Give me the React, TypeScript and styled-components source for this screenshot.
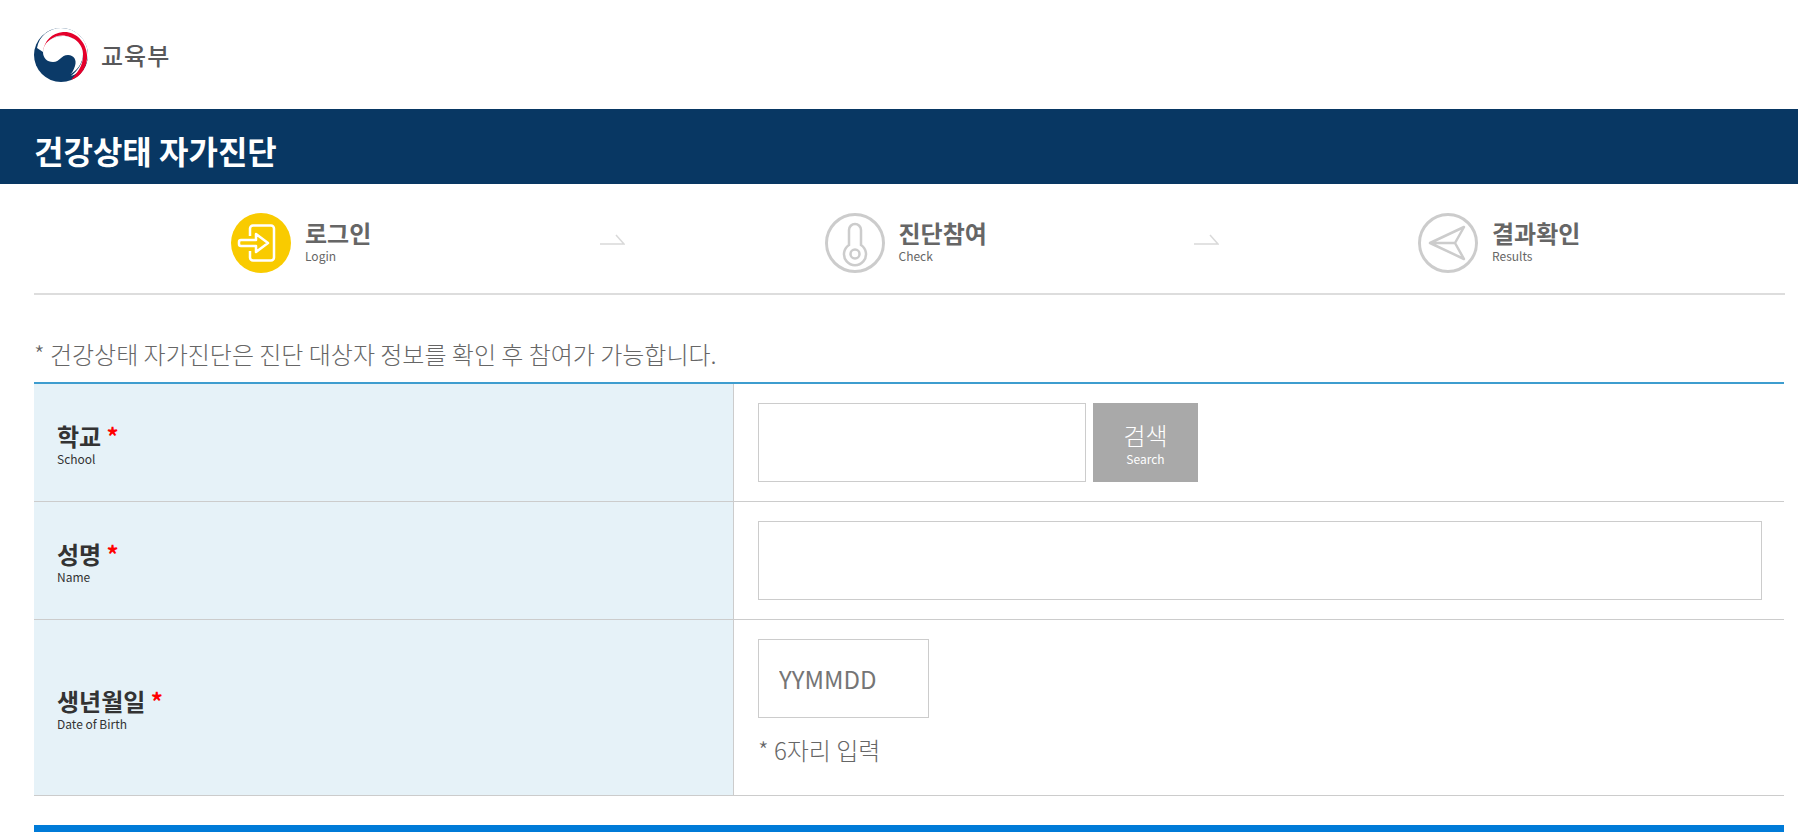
import styled, { createGlobalStyle } from 'styled-components';

const GlobalStyle = createGlobalStyle`
  * {
    box-sizing: border-box;
  }
  html, body {
    margin: 0;
    padding: 0;
    height: 832px;
    overflow: hidden;
    background: #fff;
    font-family: 'Noto Sans CJK KR', 'Noto Sans', sans-serif;
  }
`;

const Header = styled.header`
  height: 109px;
  padding: 28px 0 0 34px;
  display: flex;
  align-items: flex-start;
  gap: 11px;
`;

const MinistryName = styled.span`
  font-size: 24px;
  line-height: 54px;
  font-weight: 500;
  letter-spacing: 1px;
  color: #58585a;
`;

const TitleBar = styled.h1`
  margin: 0;
  height: 75px;
  padding-left: 34px;
  background: #083763;
  color: #fff;
  font-size: 32px;
  line-height: 83px;
  font-weight: 700;
`;

const Main = styled.main`
  width: 1751px;
  margin-left: 34px;
`;

const Steps = styled.ol`
  list-style: none;
  margin: 0;
  height: 111px;
  padding: 29px 0 0 197px;
  display: grid;
  grid-template-columns: repeat(3, 593.5px);
  border-bottom: 2px solid #dddddd;
`;

const Step = styled.li`
  display: grid;
  grid-template-columns: 60px 309px 25px;
  align-items: start;
`;

const StepText = styled.div`
  margin-left: 14px;
  padding-top: 5px;
`;

const StepTitle = styled.div`
  font-size: 24px;
  line-height: 30px;
  font-weight: 700;
  color: #666666;
`;

const StepSub = styled.div`
  font-size: 12px;
  line-height: 16px;
  color: #666666;
`;

const StepArrow = styled.svg`
  width: 25px;
  height: 12px;
  margin-top: 20px;
`;

const Notice = styled.p`
  margin: 0;
  height: 87px;
  padding-top: 39px;
  font-size: 24px;
  line-height: 40px;
  font-weight: 300;
  color: #666666;
`;

const Table = styled.div`
  width: 1750px;
  border-top: 2px solid #3e9dcf;
`;

const Row = styled.div<{ $height: number }>`
  display: grid;
  grid-template-columns: 700px 1fr;
  height: ${props => props.$height}px;
  border-bottom: 1px solid #cccccc;
`;

const LabelCell = styled.div`
  background: #e6f2f8;
  border-right: 1px solid #cccccc;
  padding-left: 23px;
  display: flex;
  flex-direction: column;
  justify-content: center;
`;

const LabelText = styled.div`
  font-size: 24px;
  line-height: 32px;
  font-weight: 700;
  color: #333333;
`;

const Required = styled.span`
  color: #ff0000;
`;

const LabelSub = styled.div`
  font-size: 12px;
  line-height: 14px;
  color: #333333;
`;

const FieldCell = styled.div`
  padding: 19px 22px 0 24px;
  display: flex;
  flex-direction: column;
  align-items: flex-start;
`;

const FieldRow = styled.div`
  display: flex;
  gap: 7px;
`;

const TextInput = styled.input<{ $width: number }>`
  display: block;
  width: ${props => props.$width}px;
  height: 79px;
  border: 1px solid #cccccc;
  border-radius: 0;
  background: #fff;
  padding: 0 20px;
  font-family: inherit;
  font-size: 24px;
  color: #333333;
  outline: none;

  &::placeholder {
    color: #757575;
    opacity: 1;
  }
`;

const SearchButton = styled.button`
  width: 105px;
  height: 79px;
  border: 0;
  padding: 0;
  background: #a9a9a9;
  color: #fff;
  font-family: inherit;
  display: flex;
  flex-direction: column;
  align-items: center;
  justify-content: center;
`;

const SearchLabel = styled.span`
  font-size: 24px;
  line-height: 32px;
  font-weight: 300;
`;

const SearchSub = styled.span`
  font-size: 12px;
  line-height: 16px;
`;

const Hint = styled.p`
  margin: 12px 0 0;
  font-size: 24px;
  line-height: 40px;
  font-weight: 300;
  color: #666666;
`;

const SubmitBar = styled.button`
  display: block;
  width: 1750px;
  height: 70px;
  margin-top: 29px;
  border: 0;
  background: #007bd8;
`;

const Logo = () => (
  <svg width="56" height="56" viewBox="0 0 56 56">
    <circle cx="27" cy="27" r="27" fill="#0b3a68" />
    <path d="M9 24C11 14 19 8 29 8c11 0 20 8 20 19 0 9-6 16-12 21 9-3 17-11 17-21C54 12 42 0 27 0 15 0 5 8 3 20Z" fill="#fff" />
    <path d="M9 24C12 12 22 6 32 8c10 2 17 10 17 20 0 10-6 17-12 24 10-3 17-14 16-25C52 13 41 3 29 4 18 5 10 13 9 24Z" fill="#e4002b" />
    <path d="M9 24c0 6 4 10 10 10 7 0 8-7 15-7 6 0 9 5 7 11-2 6-4 8-6 9 8-4 14-12 14-21C49 16 40 8 29 8 18 8 9 15 9 24Z" fill="#fff" />
    <path d="M9 24c0 6 4 10 10 10 7 0 8-7 15-7 6 0 9 5 7 11-3 8-8 12-14 16h-2" fill="none" />
  </svg>
);

const ArrowIcon = () => (
  <StepArrow viewBox="0 0 25 12">
    <path d="M0 11h24L16 2" fill="none" stroke="#d9d9d9" strokeWidth="1.5" />
  </StepArrow>
);

const LoginIcon = () => (
  <svg width="60" height="60" viewBox="0 0 60 60">
    <circle cx="30" cy="30" r="30" fill="#f9cb00" />
    <path d="M19 23v-7.500a3 3 0 0 1 3-3h18a3 3 0 0 1 3 3v29a3 3 0 0 1-3 3H22a3 3 0 0 1-3-3V38" fill="none" stroke="#fff" strokeWidth="2.500" />
    <path d="M10 27h15v-6l12 9-12 9v-6H10a2 2 0 0 1-2-2v-2a2 2 0 0 1 2-2Z" fill="none" stroke="#fff" strokeWidth="2.500" strokeLinejoin="round" />
  </svg>
);

const ThermometerIcon = () => (
  <svg width="60" height="60" viewBox="0 0 60 60" fill="none" stroke="#cccccc">
    <circle cx="30" cy="30" r="28.500" strokeWidth="3" />
    <path d="M24 32V17a6 6 0 0 1 12 0v15a11 11 0 1 1-12 0Z" strokeWidth="2.500" />
    <circle cx="30" cy="41" r="4.500" strokeWidth="2.500" />
  </svg>
);

const SendIcon = () => (
  <svg width="60" height="60" viewBox="0 0 60 60" fill="none" stroke="#cccccc">
    <circle cx="30" cy="30" r="28.500" strokeWidth="3" />
    <path d="M12 30 46 14 37 30 46 46Z M12 30H37" strokeWidth="2.500" strokeLinejoin="round" />
  </svg>
);

const steps = [
  { title: '로그인', sub: 'Login', icon: <LoginIcon />, arrow: true },
  { title: '진단참여', sub: 'Check', icon: <ThermometerIcon />, arrow: true },
  { title: '결과확인', sub: 'Results', icon: <SendIcon />, arrow: false },
];

const App = () => {
  return (
    <>
      <GlobalStyle />
      <Header>
        <Logo />
        <MinistryName>교육부</MinistryName>
      </Header>
      <TitleBar>건강상태 자가진단</TitleBar>
      <Main>
        <Steps>
          {steps.map(step => (
            <Step key={step.sub}>
              {step.icon}
              <StepText>
                <StepTitle>{step.title}</StepTitle>
                <StepSub>{step.sub}</StepSub>
              </StepText>
              {step.arrow && <ArrowIcon />}
            </Step>
          ))}
        </Steps>
        <Notice>* 건강상태 자가진단은 진단 대상자 정보를 확인 후 참여가 가능합니다.</Notice>
        <Table>
          <Row $height={118}>
            <LabelCell>
              <LabelText>학교 <Required>*</Required></LabelText>
              <LabelSub>School</LabelSub>
            </LabelCell>
            <FieldCell>
              <FieldRow>
                <TextInput $width={328} />
                <SearchButton>
                  <SearchLabel>검색</SearchLabel>
                  <SearchSub>Search</SearchSub>
                </SearchButton>
              </FieldRow>
            </FieldCell>
          </Row>
          <Row $height={118}>
            <LabelCell>
              <LabelText>성명 <Required>*</Required></LabelText>
              <LabelSub>Name</LabelSub>
            </LabelCell>
            <FieldCell>
              <TextInput $width={1004} />
            </FieldCell>
          </Row>
          <Row $height={176}>
            <LabelCell>
              <LabelText>생년월일 <Required>*</Required></LabelText>
              <LabelSub>Date of Birth</LabelSub>
            </LabelCell>
            <FieldCell>
              <TextInput $width={171} placeholder="YYMMDD" />
              <Hint>* 6자리 입력</Hint>
            </FieldCell>
          </Row>
        </Table>
        <SubmitBar />
      </Main>
    </>
  );
};

export default App;
